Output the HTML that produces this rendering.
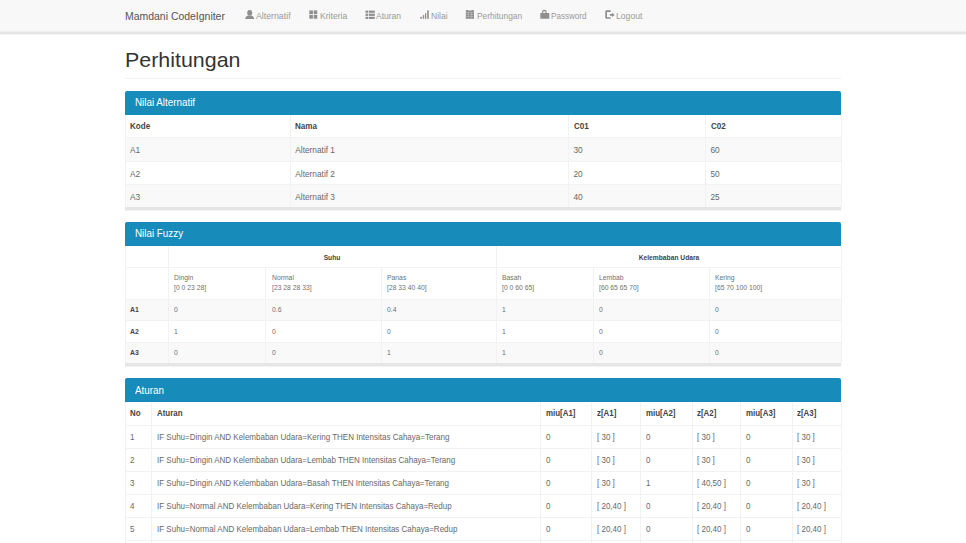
<!DOCTYPE html><html><head><meta charset="utf-8"><style>
*{margin:0;padding:0;box-sizing:border-box}
html,body{width:966px;height:543px;overflow:hidden;background:#fff;font-family:"Liberation Sans", sans-serif;}
div{position:absolute}
.t{white-space:nowrap;line-height:10px;height:10px}
.brand{color:#555}
.nl{color:#999}
svg{position:absolute;fill:#8f8f8f}
.title{color:#333}
.ph{background:#178cbb;border-radius:2px 2px 0 0}
.pht{color:#fff}
.sh{background:#e5e5e5}
.st{background:#f9f9f9}
.ln{background:#f2f2f2}
.th{color:#444;font-weight:bold}
.td{color:#686868}
.tf{color:#707070}
</style></head><body><div class="" style="left:0.00px;top:0.00px;width:966.00px;height:31.00px;background:#f8f8f8"></div>
<div class="" style="left:0.00px;top:31.00px;width:966.00px;height:1.00px;background:#efefef"></div>
<div class="" style="left:0.00px;top:32.00px;width:966.00px;height:2.00px;background:#e5e5e5"></div>
<div class="" style="left:0.00px;top:34.00px;width:966.00px;height:1.00px;background:#f4f4f4"></div>
<div class="t brand" style="left:124.80px;top:11.09px;font-size:11.0px;transform-origin:0 0;transform:scaleX(0.95);">Mamdani CodeIgniter</div>
<svg style="left:244px;top:9px" width="12" height="11" viewBox="0 0 12 11"><rect x="3.3" y="1.0" width="4.8" height="5.6" rx="2.2"/><path d="M1.2 10 C1.3 7.8 2.4 6.9 4.2 6.4 L7.2 6.4 C9 6.9 10.1 7.8 10.2 10 Z"/></svg>
<div class="t nl" style="left:255.90px;top:10.95px;font-size:8.8px;transform-origin:0 0;">Alternatif</div>
<svg style="left:308px;top:9px" width="12" height="11" viewBox="0 0 12 11"><rect x="1.3" y="1.4" width="3.6" height="3.6"/><rect x="5.7" y="1.4" width="3.6" height="3.6"/><rect x="1.3" y="5.8" width="3.6" height="3.9"/><rect x="5.7" y="5.8" width="3.6" height="3.9"/></svg>
<div class="t nl" style="left:319.60px;top:10.95px;font-size:8.8px;transform-origin:0 0;transform:scaleX(0.976);">Kriteria</div>
<svg style="left:364px;top:9px" width="12" height="11" viewBox="0 0 12 11"><rect x="1.5" y="1.6" width="2.6" height="2.2"/><rect x="4.8" y="1.6" width="6" height="2.2"/><rect x="1.5" y="4.7" width="2.6" height="2.2"/><rect x="4.8" y="4.7" width="6" height="2.2"/><rect x="1.5" y="7.8" width="2.6" height="2.2"/><rect x="4.8" y="7.8" width="6" height="2.2"/></svg>
<div class="t nl" style="left:376.00px;top:10.95px;font-size:8.8px;transform-origin:0 0;transform:scaleX(0.964);">Aturan</div>
<svg style="left:419px;top:9px" width="12" height="11" viewBox="0 0 12 11"><rect x="1.3" y="7.8" width="1.6" height="2"/><rect x="3.8" y="6.1" width="1.4" height="3.7"/><rect x="6" y="4.2" width="1.3" height="5.6"/><rect x="8.2" y="1.3" width="1.6" height="8.5"/></svg>
<div class="t nl" style="left:431.00px;top:10.95px;font-size:8.8px;transform-origin:0 0;transform:scaleX(0.97);">Nilai</div>
<svg style="left:465px;top:9px" width="12" height="11" viewBox="0 0 12 11"><path d="M0.8 1.5 H9 V9.8 H0.8 Z"/><rect x="1.4" y="1.0" width="1.8" height="1"/><rect x="6.6" y="1.0" width="1.8" height="1"/><g fill="#fff" opacity="0.45"><rect x="0.8" y="3.3" width="8.2" height="0.6"/><rect x="0.8" y="5.3" width="8.2" height="0.5"/><rect x="0.8" y="7.3" width="8.2" height="0.5"/><rect x="3.4" y="3.3" width="0.5" height="6.5"/><rect x="6.0" y="3.3" width="0.5" height="6.5"/></g></svg>
<div class="t nl" style="left:476.60px;top:10.95px;font-size:8.8px;transform-origin:0 0;transform:scaleX(0.95);">Perhitungan</div>
<svg style="left:539px;top:9px" width="12" height="11" viewBox="0 0 12 11"><rect x="1.3" y="4.1" width="9" height="5.7" rx="0.4"/><path d="M3.0 4.4 V3.2 A2.35 2.35 0 0 1 7.7 3.2 V4.4 H6.6 V3.4 A1.25 1.25 0 0 0 4.1 3.4 V4.4 Z"/></svg>
<div class="t nl" style="left:551.00px;top:10.95px;font-size:8.8px;transform-origin:0 0;transform:scaleX(0.92);">Password</div>
<svg style="left:604px;top:9px" width="12" height="11" viewBox="0 0 12 11"><path d="M1.3 2.5 A1.2 1.2 0 0 1 2.5 1.2 H6.7 V2.9 H3.0 V8.2 H6.7 V9.8 H2.5 A1.2 1.2 0 0 1 1.3 8.6 Z"/><path d="M5.8 5.0 H8.0 V3.8 L10.7 5.9 L8.0 8.0 V6.8 H5.8 Z"/></svg>
<div class="t nl" style="left:616.00px;top:10.95px;font-size:8.8px;transform-origin:0 0;transform:scaleX(0.98);">Logout</div>
<div class="t title" style="left:125.30px;top:54.59px;font-size:21.1px;transform-origin:0 0;transform:scaleX(1.015);">Perhitungan</div>
<div class="" style="left:125.00px;top:78.00px;width:716.00px;height:1.00px;background:#f1f1f1"></div>
<div class="ph" style="left:125.00px;top:91.00px;width:716.00px;height:24.00px;"></div>
<div class="t pht" style="left:134.60px;top:97.26px;font-size:10.8px;transform-origin:0 0;transform:scaleX(0.91);">Nilai Alternatif</div>
<div class="st" style="left:125.00px;top:137.60px;width:716.00px;height:23.70px;"></div>
<div class="st" style="left:125.00px;top:184.20px;width:716.00px;height:22.60px;"></div>
<div class="ln" style="left:125.00px;top:137.10px;width:716.00px;height:1.00px;"></div>
<div class="ln" style="left:125.00px;top:160.80px;width:716.00px;height:1.00px;"></div>
<div class="ln" style="left:125.00px;top:183.70px;width:716.00px;height:1.00px;"></div>
<div class="ln" style="left:125.00px;top:115.00px;width:1.00px;height:91.80px;"></div>
<div class="ln" style="left:840.60px;top:115.00px;width:1.00px;height:91.80px;"></div>
<div class="ln" style="left:289.80px;top:115.00px;width:1.00px;height:91.80px;"></div>
<div class="ln" style="left:567.70px;top:115.00px;width:1.00px;height:91.80px;"></div>
<div class="ln" style="left:705.00px;top:115.00px;width:1.00px;height:91.80px;"></div>
<div class="sh" style="left:125.00px;top:206.80px;width:716.00px;height:3.00px;"></div>
<div class="" style="left:125.00px;top:209.80px;width:716.00px;height:1.00px;background:#f4f4f4"></div>
<div class="t th" style="left:130.00px;top:121.09px;font-size:8.7px;transform-origin:0 0;transform:scaleX(0.93);">Kode</div>
<div class="t th" style="left:295.30px;top:121.09px;font-size:8.7px;transform-origin:0 0;transform:scaleX(0.93);">Nama</div>
<div class="t th" style="left:573.50px;top:121.09px;font-size:8.7px;transform-origin:0 0;transform:scaleX(0.93);">C01</div>
<div class="t th" style="left:710.50px;top:121.09px;font-size:8.7px;transform-origin:0 0;transform:scaleX(0.93);">C02</div>
<div class="t td" style="left:130.00px;top:144.92px;font-size:8.3px;transform-origin:0 0;">A1</div>
<div class="t td" style="left:295.30px;top:144.92px;font-size:8.3px;transform-origin:0 0;">Alternatif 1</div>
<div class="t td" style="left:573.50px;top:144.92px;font-size:8.3px;transform-origin:0 0;">30</div>
<div class="t td" style="left:710.50px;top:144.92px;font-size:8.3px;transform-origin:0 0;">60</div>
<div class="t td" style="left:130.00px;top:168.62px;font-size:8.3px;transform-origin:0 0;">A2</div>
<div class="t td" style="left:295.30px;top:168.62px;font-size:8.3px;transform-origin:0 0;">Alternatif 2</div>
<div class="t td" style="left:573.50px;top:168.62px;font-size:8.3px;transform-origin:0 0;">20</div>
<div class="t td" style="left:710.50px;top:168.62px;font-size:8.3px;transform-origin:0 0;">50</div>
<div class="t td" style="left:130.00px;top:191.52px;font-size:8.3px;transform-origin:0 0;">A3</div>
<div class="t td" style="left:295.30px;top:191.52px;font-size:8.3px;transform-origin:0 0;">Alternatif 3</div>
<div class="t td" style="left:573.50px;top:191.52px;font-size:8.3px;transform-origin:0 0;">40</div>
<div class="t td" style="left:710.50px;top:191.52px;font-size:8.3px;transform-origin:0 0;">25</div>
<div class="ph" style="left:125.00px;top:222.20px;width:716.00px;height:24.10px;"></div>
<div class="t pht" style="left:134.60px;top:228.46px;font-size:10.8px;transform-origin:0 0;transform:scaleX(0.91);">Nilai Fuzzy</div>
<div class="st" style="left:125.00px;top:299.10px;width:716.00px;height:21.60px;"></div>
<div class="st" style="left:125.00px;top:342.20px;width:716.00px;height:20.40px;"></div>
<div class="ln" style="left:125.00px;top:266.70px;width:716.00px;height:1.00px;"></div>
<div class="ln" style="left:125.00px;top:298.60px;width:716.00px;height:1.00px;"></div>
<div class="ln" style="left:125.00px;top:320.20px;width:716.00px;height:1.00px;"></div>
<div class="ln" style="left:125.00px;top:341.70px;width:716.00px;height:1.00px;"></div>
<div class="ln" style="left:125.00px;top:246.30px;width:1.00px;height:116.30px;"></div>
<div class="ln" style="left:840.60px;top:246.30px;width:1.00px;height:116.30px;"></div>
<div class="ln" style="left:167.50px;top:246.30px;width:1.00px;height:116.30px;"></div>
<div class="ln" style="left:264.70px;top:267.20px;width:1.00px;height:95.40px;"></div>
<div class="ln" style="left:380.70px;top:267.20px;width:1.00px;height:95.40px;"></div>
<div class="ln" style="left:496.10px;top:246.30px;width:1.00px;height:116.30px;"></div>
<div class="ln" style="left:593.00px;top:267.20px;width:1.00px;height:95.40px;"></div>
<div class="ln" style="left:708.60px;top:267.20px;width:1.00px;height:95.40px;"></div>
<div class="sh" style="left:125.00px;top:362.60px;width:716.00px;height:3.00px;"></div>
<div class="" style="left:125.00px;top:365.60px;width:716.00px;height:1.00px;background:#f4f4f4"></div>
<div class="t th" style="left:132.30px;width:400px;text-align:center;top:252.71px;font-size:7.2px;transform:scaleX(0.93);">Suhu</div>
<div class="t th" style="left:469.00px;width:400px;text-align:center;top:252.71px;font-size:7.2px;transform:scaleX(0.93);">Kelembaban Udara</div>
<div class="t tf" style="left:173.80px;top:273.24px;font-size:7.4px;transform-origin:0 0;transform:scaleX(0.92);">Dingin</div>
<div class="t tf" style="left:173.80px;top:283.44px;font-size:7.4px;transform-origin:0 0;transform:scaleX(0.92);">[0 0 23 28]</div>
<div class="t tf" style="left:271.80px;top:273.24px;font-size:7.4px;transform-origin:0 0;transform:scaleX(0.92);">Normal</div>
<div class="t tf" style="left:271.80px;top:283.44px;font-size:7.4px;transform-origin:0 0;transform:scaleX(0.92);">[23 28 28 33]</div>
<div class="t tf" style="left:387.00px;top:273.24px;font-size:7.4px;transform-origin:0 0;transform:scaleX(0.92);">Panas</div>
<div class="t tf" style="left:387.00px;top:283.44px;font-size:7.4px;transform-origin:0 0;transform:scaleX(0.92);">[28 33 40 40]</div>
<div class="t tf" style="left:502.00px;top:273.24px;font-size:7.4px;transform-origin:0 0;transform:scaleX(0.92);">Basah</div>
<div class="t tf" style="left:502.00px;top:283.44px;font-size:7.4px;transform-origin:0 0;transform:scaleX(0.92);">[0 0 60 65]</div>
<div class="t tf" style="left:599.00px;top:273.24px;font-size:7.4px;transform-origin:0 0;transform:scaleX(0.92);">Lembab</div>
<div class="t tf" style="left:599.00px;top:283.44px;font-size:7.4px;transform-origin:0 0;transform:scaleX(0.92);">[60 65 65 70]</div>
<div class="t tf" style="left:714.60px;top:273.24px;font-size:7.4px;transform-origin:0 0;transform:scaleX(0.92);">Kering</div>
<div class="t tf" style="left:714.60px;top:283.44px;font-size:7.4px;transform-origin:0 0;transform:scaleX(0.92);">[65 70 100 100]</div>
<div class="t th" style="left:130.00px;top:305.24px;font-size:7.4px;transform-origin:0 0;transform:scaleX(0.93);">A1</div>
<div class="t tf" style="left:173.80px;top:305.34px;font-size:7.4px;transform-origin:0 0;transform:scaleX(0.92);">0</div>
<div class="t tf" style="left:271.80px;top:305.34px;font-size:7.4px;transform-origin:0 0;transform:scaleX(0.92);">0.6</div>
<div class="t tf" style="left:387.00px;top:305.34px;font-size:7.4px;transform-origin:0 0;transform:scaleX(0.92);">0.4</div>
<div class="t tf" style="left:502.00px;top:305.34px;font-size:7.4px;transform-origin:0 0;transform:scaleX(0.92);">1</div>
<div class="t tf" style="left:599.00px;top:305.34px;font-size:7.4px;transform-origin:0 0;transform:scaleX(0.92);">0</div>
<div class="t tf" style="left:714.60px;top:305.34px;font-size:7.4px;transform-origin:0 0;transform:scaleX(0.92);">0</div>
<div class="t th" style="left:130.00px;top:326.84px;font-size:7.4px;transform-origin:0 0;transform:scaleX(0.93);">A2</div>
<div class="t tf" style="left:173.80px;top:326.94px;font-size:7.4px;transform-origin:0 0;transform:scaleX(0.92);">1</div>
<div class="t tf" style="left:271.80px;top:326.94px;font-size:7.4px;transform-origin:0 0;transform:scaleX(0.92);">0</div>
<div class="t tf" style="left:387.00px;top:326.94px;font-size:7.4px;transform-origin:0 0;transform:scaleX(0.92);">0</div>
<div class="t tf" style="left:502.00px;top:326.94px;font-size:7.4px;transform-origin:0 0;transform:scaleX(0.92);">1</div>
<div class="t tf" style="left:599.00px;top:326.94px;font-size:7.4px;transform-origin:0 0;transform:scaleX(0.92);">0</div>
<div class="t tf" style="left:714.60px;top:326.94px;font-size:7.4px;transform-origin:0 0;transform:scaleX(0.92);">0</div>
<div class="t th" style="left:130.00px;top:348.34px;font-size:7.4px;transform-origin:0 0;transform:scaleX(0.93);">A3</div>
<div class="t tf" style="left:173.80px;top:348.44px;font-size:7.4px;transform-origin:0 0;transform:scaleX(0.92);">0</div>
<div class="t tf" style="left:271.80px;top:348.44px;font-size:7.4px;transform-origin:0 0;transform:scaleX(0.92);">0</div>
<div class="t tf" style="left:387.00px;top:348.44px;font-size:7.4px;transform-origin:0 0;transform:scaleX(0.92);">1</div>
<div class="t tf" style="left:502.00px;top:348.44px;font-size:7.4px;transform-origin:0 0;transform:scaleX(0.92);">1</div>
<div class="t tf" style="left:599.00px;top:348.44px;font-size:7.4px;transform-origin:0 0;transform:scaleX(0.92);">0</div>
<div class="t tf" style="left:714.60px;top:348.44px;font-size:7.4px;transform-origin:0 0;transform:scaleX(0.92);">0</div>
<div class="ph" style="left:125.00px;top:378.40px;width:716.00px;height:23.60px;"></div>
<div class="t pht" style="left:134.60px;top:384.66px;font-size:10.8px;transform-origin:0 0;transform:scaleX(0.91);">Aturan</div>
<div class="ln" style="left:125.00px;top:424.80px;width:716.00px;height:1.00px;"></div>
<div class="ln" style="left:125.00px;top:447.70px;width:716.00px;height:1.00px;"></div>
<div class="ln" style="left:125.00px;top:470.80px;width:716.00px;height:1.00px;"></div>
<div class="ln" style="left:125.00px;top:494.00px;width:716.00px;height:1.00px;"></div>
<div class="ln" style="left:125.00px;top:516.90px;width:716.00px;height:1.00px;"></div>
<div class="ln" style="left:125.00px;top:539.70px;width:716.00px;height:1.00px;"></div>
<div class="ln" style="left:125.00px;top:402.00px;width:1.00px;height:161.00px;"></div>
<div class="ln" style="left:840.60px;top:402.00px;width:1.00px;height:161.00px;"></div>
<div class="ln" style="left:150.80px;top:402.00px;width:1.00px;height:161.00px;"></div>
<div class="ln" style="left:540.30px;top:402.00px;width:1.00px;height:161.00px;"></div>
<div class="ln" style="left:591.10px;top:402.00px;width:1.00px;height:161.00px;"></div>
<div class="ln" style="left:640.10px;top:402.00px;width:1.00px;height:161.00px;"></div>
<div class="ln" style="left:691.80px;top:402.00px;width:1.00px;height:161.00px;"></div>
<div class="ln" style="left:739.90px;top:402.00px;width:1.00px;height:161.00px;"></div>
<div class="ln" style="left:791.80px;top:402.00px;width:1.00px;height:161.00px;"></div>
<div class="sh" style="left:125.00px;top:563.00px;width:716.00px;height:3.00px;"></div>
<div class="" style="left:125.00px;top:566.00px;width:716.00px;height:1.00px;background:#f4f4f4"></div>
<div class="t th" style="left:130.00px;top:408.22px;font-size:8.6px;transform-origin:0 0;transform:scaleX(0.92);">No</div>
<div class="t th" style="left:157.00px;top:408.22px;font-size:8.6px;transform-origin:0 0;transform:scaleX(0.92);">Aturan</div>
<div class="t th" style="left:545.70px;top:408.22px;font-size:8.6px;transform-origin:0 0;transform:scaleX(0.92);">miu[A1]</div>
<div class="t th" style="left:597.00px;top:408.22px;font-size:8.6px;transform-origin:0 0;transform:scaleX(0.92);">z[A1]</div>
<div class="t th" style="left:645.90px;top:408.22px;font-size:8.6px;transform-origin:0 0;transform:scaleX(0.92);">miu[A2]</div>
<div class="t th" style="left:697.40px;top:408.22px;font-size:8.6px;transform-origin:0 0;transform:scaleX(0.92);">z[A2]</div>
<div class="t th" style="left:745.50px;top:408.22px;font-size:8.6px;transform-origin:0 0;transform:scaleX(0.92);">miu[A3]</div>
<div class="t th" style="left:797.40px;top:408.22px;font-size:8.6px;transform-origin:0 0;transform:scaleX(0.92);">z[A3]</div>
<div class="t td" style="left:130.00px;top:431.85px;font-size:8.8px;transform-origin:0 0;transform:scaleX(0.91);">1</div>
<div class="t td" style="left:157.00px;top:431.85px;font-size:8.8px;transform-origin:0 0;transform:scaleX(0.91);">IF Suhu=Dingin AND Kelembaban Udara=Kering THEN Intensitas Cahaya=Terang</div>
<div class="t td" style="left:545.70px;top:431.85px;font-size:8.8px;transform-origin:0 0;transform:scaleX(0.91);">0</div>
<div class="t td" style="left:597.00px;top:431.85px;font-size:8.8px;transform-origin:0 0;transform:scaleX(0.91);">[ 30 ]</div>
<div class="t td" style="left:645.90px;top:431.85px;font-size:8.8px;transform-origin:0 0;transform:scaleX(0.91);">0</div>
<div class="t td" style="left:697.40px;top:431.85px;font-size:8.8px;transform-origin:0 0;transform:scaleX(0.91);">[ 30 ]</div>
<div class="t td" style="left:745.50px;top:431.85px;font-size:8.8px;transform-origin:0 0;transform:scaleX(0.91);">0</div>
<div class="t td" style="left:797.40px;top:431.85px;font-size:8.8px;transform-origin:0 0;transform:scaleX(0.91);">[ 30 ]</div>
<div class="t td" style="left:130.00px;top:454.75px;font-size:8.8px;transform-origin:0 0;transform:scaleX(0.91);">2</div>
<div class="t td" style="left:157.00px;top:454.75px;font-size:8.8px;transform-origin:0 0;transform:scaleX(0.91);">IF Suhu=Dingin AND Kelembaban Udara=Lembab THEN Intensitas Cahaya=Terang</div>
<div class="t td" style="left:545.70px;top:454.75px;font-size:8.8px;transform-origin:0 0;transform:scaleX(0.91);">0</div>
<div class="t td" style="left:597.00px;top:454.75px;font-size:8.8px;transform-origin:0 0;transform:scaleX(0.91);">[ 30 ]</div>
<div class="t td" style="left:645.90px;top:454.75px;font-size:8.8px;transform-origin:0 0;transform:scaleX(0.91);">0</div>
<div class="t td" style="left:697.40px;top:454.75px;font-size:8.8px;transform-origin:0 0;transform:scaleX(0.91);">[ 30 ]</div>
<div class="t td" style="left:745.50px;top:454.75px;font-size:8.8px;transform-origin:0 0;transform:scaleX(0.91);">0</div>
<div class="t td" style="left:797.40px;top:454.75px;font-size:8.8px;transform-origin:0 0;transform:scaleX(0.91);">[ 30 ]</div>
<div class="t td" style="left:130.00px;top:477.85px;font-size:8.8px;transform-origin:0 0;transform:scaleX(0.91);">3</div>
<div class="t td" style="left:157.00px;top:477.85px;font-size:8.8px;transform-origin:0 0;transform:scaleX(0.91);">IF Suhu=Dingin AND Kelembaban Udara=Basah THEN Intensitas Cahaya=Terang</div>
<div class="t td" style="left:545.70px;top:477.85px;font-size:8.8px;transform-origin:0 0;transform:scaleX(0.91);">0</div>
<div class="t td" style="left:597.00px;top:477.85px;font-size:8.8px;transform-origin:0 0;transform:scaleX(0.91);">[ 30 ]</div>
<div class="t td" style="left:645.90px;top:477.85px;font-size:8.8px;transform-origin:0 0;transform:scaleX(0.91);">1</div>
<div class="t td" style="left:697.40px;top:477.85px;font-size:8.8px;transform-origin:0 0;transform:scaleX(0.91);">[ 40,50 ]</div>
<div class="t td" style="left:745.50px;top:477.85px;font-size:8.8px;transform-origin:0 0;transform:scaleX(0.91);">0</div>
<div class="t td" style="left:797.40px;top:477.85px;font-size:8.8px;transform-origin:0 0;transform:scaleX(0.91);">[ 30 ]</div>
<div class="t td" style="left:130.00px;top:501.05px;font-size:8.8px;transform-origin:0 0;transform:scaleX(0.91);">4</div>
<div class="t td" style="left:157.00px;top:501.05px;font-size:8.8px;transform-origin:0 0;transform:scaleX(0.91);">IF Suhu=Normal AND Kelembaban Udara=Kering THEN Intensitas Cahaya=Redup</div>
<div class="t td" style="left:545.70px;top:501.05px;font-size:8.8px;transform-origin:0 0;transform:scaleX(0.91);">0</div>
<div class="t td" style="left:597.00px;top:501.05px;font-size:8.8px;transform-origin:0 0;transform:scaleX(0.91);">[ 20,40 ]</div>
<div class="t td" style="left:645.90px;top:501.05px;font-size:8.8px;transform-origin:0 0;transform:scaleX(0.91);">0</div>
<div class="t td" style="left:697.40px;top:501.05px;font-size:8.8px;transform-origin:0 0;transform:scaleX(0.91);">[ 20,40 ]</div>
<div class="t td" style="left:745.50px;top:501.05px;font-size:8.8px;transform-origin:0 0;transform:scaleX(0.91);">0</div>
<div class="t td" style="left:797.40px;top:501.05px;font-size:8.8px;transform-origin:0 0;transform:scaleX(0.91);">[ 20,40 ]</div>
<div class="t td" style="left:130.00px;top:523.95px;font-size:8.8px;transform-origin:0 0;transform:scaleX(0.91);">5</div>
<div class="t td" style="left:157.00px;top:523.95px;font-size:8.8px;transform-origin:0 0;transform:scaleX(0.91);">IF Suhu=Normal AND Kelembaban Udara=Lembab THEN Intensitas Cahaya=Redup</div>
<div class="t td" style="left:545.70px;top:523.95px;font-size:8.8px;transform-origin:0 0;transform:scaleX(0.91);">0</div>
<div class="t td" style="left:597.00px;top:523.95px;font-size:8.8px;transform-origin:0 0;transform:scaleX(0.91);">[ 20,40 ]</div>
<div class="t td" style="left:645.90px;top:523.95px;font-size:8.8px;transform-origin:0 0;transform:scaleX(0.91);">0</div>
<div class="t td" style="left:697.40px;top:523.95px;font-size:8.8px;transform-origin:0 0;transform:scaleX(0.91);">[ 20,40 ]</div>
<div class="t td" style="left:745.50px;top:523.95px;font-size:8.8px;transform-origin:0 0;transform:scaleX(0.91);">0</div>
<div class="t td" style="left:797.40px;top:523.95px;font-size:8.8px;transform-origin:0 0;transform:scaleX(0.91);">[ 20,40 ]</div>
<div class="t td" style="left:130.00px;top:546.75px;font-size:8.8px;transform-origin:0 0;transform:scaleX(0.91);">6</div>
<div class="t td" style="left:157.00px;top:546.75px;font-size:8.8px;transform-origin:0 0;transform:scaleX(0.91);">IF Suhu=Normal AND Kelembaban Udara=Basah THEN Intensitas Cahaya=Redup</div>
<div class="t td" style="left:545.70px;top:546.75px;font-size:8.8px;transform-origin:0 0;transform:scaleX(0.91);">0</div>
<div class="t td" style="left:597.00px;top:546.75px;font-size:8.8px;transform-origin:0 0;transform:scaleX(0.91);">[ 20,40 ]</div>
<div class="t td" style="left:645.90px;top:546.75px;font-size:8.8px;transform-origin:0 0;transform:scaleX(0.91);">0</div>
<div class="t td" style="left:697.40px;top:546.75px;font-size:8.8px;transform-origin:0 0;transform:scaleX(0.91);">[ 20,40 ]</div>
<div class="t td" style="left:745.50px;top:546.75px;font-size:8.8px;transform-origin:0 0;transform:scaleX(0.91);">0</div>
<div class="t td" style="left:797.40px;top:546.75px;font-size:8.8px;transform-origin:0 0;transform:scaleX(0.91);">[ 20,40 ]</div></body></html>
